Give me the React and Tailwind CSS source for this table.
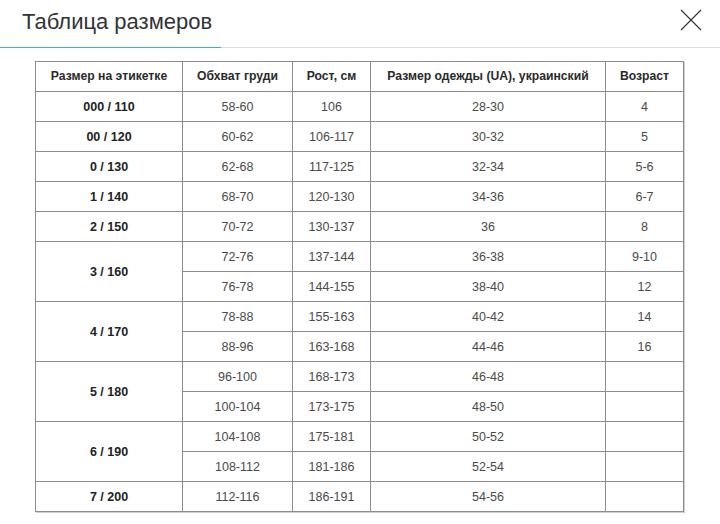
const HEAD = ['Размер на этикетке', 'Обхват груди', 'Рост, см', 'Размер одежды (UA), украинский', 'Возраст'];
const WIDTHS = ['w-[147px]', 'w-[110px]', 'w-[78px]', 'w-[235px]', 'w-[78px]'];

// size label + rowspan, then chest / height / UA / age
const ROWS = [
  { size: '000 / 110', span: 1, cells: ['58-60', '106', '28-30', '4'] },
  { size: '00 / 120', span: 1, cells: ['60-62', '106-117', '30-32', '5'] },
  { size: '0 / 130', span: 1, cells: ['62-68', '117-125', '32-34', '5-6'] },
  { size: '1 / 140', span: 1, cells: ['68-70', '120-130', '34-36', '6-7'] },
  { size: '2 / 150', span: 1, cells: ['70-72', '130-137', '36', '8'] },
  { size: '3 / 160', span: 2, cells: ['72-76', '137-144', '36-38', '9-10'] },
  { cells: ['76-78', '144-155', '38-40', '12'] },
  { size: '4 / 170', span: 2, cells: ['78-88', '155-163', '40-42', '14'] },
  { cells: ['88-96', '163-168', '44-46', '16'] },
  { size: '5 / 180', span: 2, cells: ['96-100', '168-173', '46-48', ''] },
  { cells: ['100-104', '173-175', '48-50', ''] },
  { size: '6 / 190', span: 2, cells: ['104-108', '175-181', '50-52', ''] },
  { cells: ['108-112', '181-186', '52-54', ''] },
  { size: '7 / 200', span: 1, cells: ['112-116', '186-191', '54-56', ''] },
];

export default function App() {
  return (
    <div className="w-[720px] h-[524px] bg-white overflow-hidden font-['Liberation_Sans',Arial,sans-serif]">
      {/* Modal header */}
      <div className="h-[47px] flex items-start justify-between">
        <h2 className="pl-[22px] pt-[7px] text-[22px] leading-[30px] text-[#333]">Таблица размеров</h2>
        <button className="mt-[9px] mr-[18px] text-[#333]">
          <svg width="22" height="22" viewBox="0 0 22 22" fill="none" stroke="currentColor" strokeWidth="1.1">
            <path d="M1 1L21 21M21 1L1 21" />
          </svg>
        </button>
      </div>
      <div className="flex h-px">
        <div className="w-[221px] bg-[#42aaea]" />
        <div className="flex-1 bg-[#dcdcdc]" />
      </div>

      {/* Size table */}
      <div className="pl-[35px] pt-[13px]">
        <table className="table-fixed border-collapse w-[648px] text-center shadow-[1px_1px_0_#cfcfcf]">
          <thead>
            <tr>
              {HEAD.map((h, i) => (
                <th key={i} className={`${WIDTHS[i]} h-[30px] p-0 border border-[#8c8c8c] text-[12.2px] font-bold text-[#2a2a2a]`}>
                  {h}
                </th>
              ))}
            </tr>
          </thead>
          <tbody>
            {ROWS.map((r, i) => (
              <tr key={i}>
                {r.size && (
                  <td rowSpan={r.span} className="p-0 pt-px h-[30px] border border-[#8c8c8c] text-[12.5px] font-bold text-[#222]">
                    {r.size}
                  </td>
                )}
                {r.cells.map((c, j) => (
                  <td key={j} className="p-0 pt-px h-[30px] border border-[#8c8c8c] text-[12.5px] text-[#4a4a4a]">
                    {c}
                  </td>
                ))}
              </tr>
            ))}
          </tbody>
        </table>
      </div>
    </div>
  );
}
